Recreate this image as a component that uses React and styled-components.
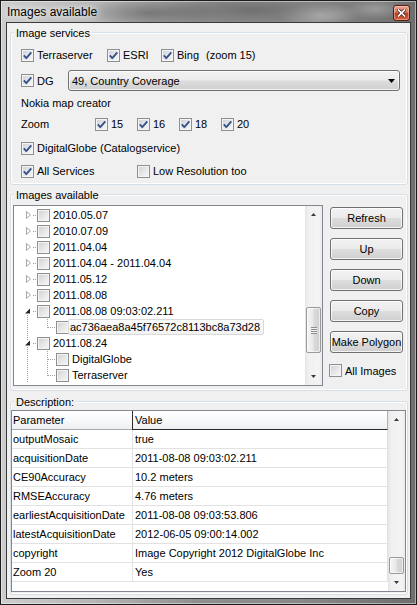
import React from 'react';
import styled, { createGlobalStyle } from 'styled-components';

const Global = createGlobalStyle`
  html, body { margin: 0; padding: 0; background: #ffffff; }
  body {
    font-family: "Liberation Sans", Arial, sans-serif;
    font-size: 11px;
    color: #000;
  }
  * { box-sizing: border-box; }
`;

const Window = styled.div`
  width: 417px;
  height: 605px;
  display: flex;
  flex-direction: column;
  border: 1px solid #1c1c1c;
  padding: 0 6px 6px;
  box-shadow: inset 0 0 0 1px rgba(255, 255, 255, 0.45);
  background:
    radial-gradient(ellipse 70px 14px at 150px 12px, rgba(80, 80, 80, 0.5), rgba(80, 80, 80, 0)),
    radial-gradient(ellipse 90px 16px at 250px 9px, rgba(95, 95, 95, 0.6), rgba(95, 95, 95, 0)),
    radial-gradient(ellipse 40px 12px at 318px 14px, rgba(200, 200, 200, 0.6), rgba(200, 200, 200, 0)),
    radial-gradient(ellipse 30px 10px at 375px 8px, rgba(190, 190, 190, 0.5), rgba(190, 190, 190, 0)),
    linear-gradient(to right, #cdcdcd 0%, #b6b6b6 22%, #8e8e8e 48%, #8a8a8a 72%, #6e6e6e 100%);
`;

const TitleBar = styled.div`
  height: 22px;
  flex: none;
  display: flex;
  align-items: center;
  justify-content: space-between;
`;

const Title = styled.span`
  font-size: 12px;
  color: #000;
  text-shadow: 0 0 6px #fff, 0 0 10px rgba(255, 255, 255, 0.9);
`;

const CloseButton = styled.div`
  align-self: flex-start;
  margin-top: 4px;
  width: 17px;
  height: 16px;
  border: 1px solid #5a1a10;
  border-radius: 3px;
  display: flex;
  align-items: center;
  justify-content: center;
  background: linear-gradient(#eaa590 0%, #d9735a 45%, #c23c21 52%, #d35e3c 100%);
  box-shadow: inset 0 0 0 1px rgba(255, 255, 255, 0.35);
`;

const Client = styled.div`
  flex: 1;
  display: flex;
  flex-direction: column;
  background: #f0f0f0;
  box-shadow: 0 0 0 1px #3a3a3a;
  padding: 0 2px 3px 3px;
`;

const Group = styled.div`
  position: relative;
  flex: none;
  margin-top: ${(p) => p.$mt}px;
  border: 1px solid #d5dfe5;
  border-radius: 3px;
  box-shadow: inset 0 0 0 1px #ffffff;
  padding: ${(p) => p.$pad};
`;

const GroupLabel = styled.span`
  position: absolute;
  top: -7px;
  left: 3px;
  padding: 0 2px;
  line-height: 14px;
  background: #f0f0f0;
`;

const Line = styled.div`
  display: flex;
  align-items: center;
  height: ${(p) => p.$h}px;
  margin-top: ${(p) => p.$mt || 0}px;
`;

const Item = styled.label`
  display: flex;
  align-items: center;
  gap: 3px;
  flex: none;
  width: ${(p) => (p.$w ? `${p.$w}px` : 'auto')};
  white-space: nowrap;
  margin-left: ${(p) => p.$ml || 0}px;
  margin-top: ${(p) => p.$mt || 0}px;
`;

const Caption = styled.span`
  flex: none;
  width: ${(p) => (p.$w ? `${p.$w}px` : 'auto')};
  white-space: nowrap;
`;

const Box = styled.span`
  flex: none;
  width: 13px;
  height: 13px;
  border: 1px solid #8e8f8f;
  display: flex;
  align-items: center;
  justify-content: center;
  background: linear-gradient(135deg, #cbced3 0%, #e3e4e6 45%, #f8f8f8 100%);
  box-shadow: inset 0 0 0 1px #f4f4f4;
`;

const Select = styled.div`
  flex: none;
  width: 332px;
  height: 21px;
  display: flex;
  align-items: center;
  justify-content: space-between;
  padding: 0 4px 0 3px;
  border: 1px solid #707070;
  border-radius: 3px;
  background: linear-gradient(#f2f2f2 0%, #ebebeb 49%, #dddddd 51%, #cfcfcf 100%);
  box-shadow: inset 0 0 0 1px rgba(255, 255, 255, 0.7);
`;

const ImagesBody = styled.div`
  display: flex;
  gap: 7px;
`;

const Tree = styled.div`
  flex: none;
  width: 310px;
  height: 181px;
  display: flex;
  border: 1px solid #828790;
  background: #ffffff;
`;

const TreeBody = styled.div`
  flex: 1;
  min-width: 0;
  padding-top: 1px;
  overflow: hidden;
`;

const TreeRow = styled.div`
  display: flex;
  align-items: center;
  height: 16px;
  white-space: nowrap;
`;

const Gutter = styled.svg`
  flex: none;
  display: block;
`;

const NodeText = styled.span`
  height: 16px;
  line-height: 14px;
  border: 1px solid ${(p) => (p.$selected ? '#d9d9d9' : 'transparent')};
  border-radius: 2px;
  padding: 0 3px 0 1px;
  margin-left: ${(p) => (p.$selected ? -1 : 1)}px;
  background: ${(p) => (p.$selected ? 'linear-gradient(#fbfbfb, #f1f1f1)' : 'transparent')};
`;

const Scroll = styled.div`
  flex: none;
  width: 17px;
  display: flex;
  flex-direction: column;
  background: linear-gradient(to right, #e4e4e4 0%, #f0f0f0 18%, #f4f4f4 82%, #e9e9e9 100%);
`;

const ScrollBtn = styled.div`
  flex: none;
  height: 17px;
  display: flex;
  align-items: center;
  justify-content: center;
`;

const Track = styled.div`
  flex: 1;
  display: flex;
  flex-direction: column;
  align-items: center;
`;

const Thumb = styled.div`
  width: 15px;
  height: ${(p) => p.$h}px;
  margin-top: ${(p) => p.$top}px;
  border: 1px solid #9a9a9a;
  border-radius: 2px;
  display: flex;
  align-items: center;
  justify-content: center;
  background: linear-gradient(to right, #f5f5f5 0%, #e9e9e9 45%, #dadada 55%, #d0d0d0 100%);
  box-shadow: inset 0 0 0 1px rgba(255, 255, 255, 0.6);
`;

const Grip = styled.span`
  width: 6px;
  height: 7px;
  background: repeating-linear-gradient(to bottom, #8c8c8c 0 1px, #f4f4f4 1px 2px);
`;

const Side = styled.div`
  flex: none;
  width: 73px;
  display: flex;
  flex-direction: column;
  gap: 9px;
  padding-top: 2px;
`;

const PushButton = styled.button`
  width: 73px;
  height: 22px;
  padding: 0;
  font-family: "Liberation Sans", Arial, sans-serif;
  font-size: 11px;
  color: #000;
  white-space: nowrap;
  border: 1px solid #707070;
  border-radius: 3px;
  background: linear-gradient(#f2f2f2 0%, #ebebeb 49%, #dddddd 51%, #cfcfcf 100%);
  box-shadow: inset 0 0 0 1px rgba(255, 255, 255, 0.75);
`;

const ListView = styled.div`
  width: 395px;
  height: 182px;
  display: flex;
  border: 1px solid #828790;
  background: #ffffff;
`;

const ListGrid = styled.div`
  flex: 1;
  min-width: 0;
  display: flex;
  flex-direction: column;
`;

const HeaderRow = styled.div`
  display: flex;
  height: 19px;
  flex: none;
`;

const HeadCell = styled.div`
  height: 19px;
  line-height: 18px;
  white-space: nowrap;
  background: linear-gradient(#ffffff 0%, #f6f7f8 60%, #eeeff1 100%);
  ${(p) =>
    p.$first
      ? `width: 120px; flex: none; padding-left: 1px; border-bottom: 1px solid #a9a9a9;`
      : `flex: 1; padding-left: 2px; border-left: 1px solid #2a2a2a; border-bottom: 1px solid #2a2a2a; border-right: 1px solid #b0b0b0;`}
`;

const ListRow = styled.div`
  display: flex;
  height: 19px;
  flex: none;
  border-bottom: 1px solid #e2e2e2;
  border-right: 1px solid #e2e2e2;
`;

const Cell = styled.div`
  line-height: 18px;
  white-space: nowrap;
  ${(p) =>
    p.$first
      ? `width: 121px; flex: none; padding-left: 1px; border-right: 1px solid #e2e2e2;`
      : `flex: 1; padding-left: 2px;`}
`;

const Check = ({ checked }) => (
  <Box>
    {checked && (
      <svg width="11" height="11" viewBox="0 0 11 11">
        <path d="M1.8 5.4 L4.3 8.2 L9.3 2.3" fill="none" stroke="#34508a" strokeWidth="1.8" strokeLinejoin="round" />
      </svg>
    )}
  </Box>
);

const Arrow = ({ down, w = 5, h = 3, color = '#3a3a3a' }) => (
  <svg width={w} height={h} viewBox={`0 0 ${w} ${h}`}>
    <path d={down ? `M0 0 L${w / 2} ${h} L${w} 0 Z` : `M0 ${h} L${w / 2} 0 L${w} ${h} Z`} fill={color} />
  </svg>
);

const ScrollBar = ({ top, height, grip }) => (
  <Scroll>
    <ScrollBtn><Arrow /></ScrollBtn>
    <Track>
      <Thumb $top={top} $h={height}>{grip && <Grip />}</Thumb>
    </Track>
    <ScrollBtn><Arrow down /></ScrollBtn>
  </Scroll>
);

const DOT = { stroke: '#a0a0a0', strokeDasharray: '1 1', strokeWidth: 1, shapeRendering: 'crispEdges' };

const RootGutter = ({ open, above, below }) => (
  <Gutter width="23" height="16" viewBox="0 0 23 16">
    {above && <line x1="13.5" y1="0" x2="13.5" y2="5" {...DOT} />}
    {below && <line x1="13.5" y1="12" x2="13.5" y2="16" {...DOT} />}
    {open ? (
      <path d="M16 5.5 L16 10.5 L11 10.5 Z" fill="#262626" />
    ) : (
      <path d="M12.5 4.5 L16.5 8 L12.5 11.5 Z" fill="#ffffff" stroke="#a6a6a6" strokeWidth="1" />
    )}
    <line x1="19" y1="8.5" x2="23" y2="8.5" {...DOT} />
  </Gutter>
);

const ChildGutter = ({ last }) => (
  <Gutter width="42" height="16" viewBox="0 0 42 16">
    <line x1="13.5" y1="0" x2="13.5" y2="16" {...DOT} />
    <line x1="33.5" y1="0" x2="33.5" y2={last ? 9 : 16} {...DOT} />
    <line x1="34" y1="8.5" x2="42" y2="8.5" {...DOT} />
  </Gutter>
);

const treeRows = [
  { text: '2010.05.07' },
  { text: '2010.07.09' },
  { text: '2011.04.04' },
  { text: '2011.04.04 - 2011.04.04' },
  { text: '2011.05.12' },
  { text: '2011.08.08' },
  { text: '2011.08.08 09:03:02.211', open: true, below: true },
  { text: 'ac736aea8a45f76572c8113bc8a73d28', child: true, last: true, selected: true },
  { text: '2011.08.24', open: true, above: true, below: true },
  { text: 'DigitalGlobe', child: true },
  { text: 'Terraserver', child: true, last: true },
];

const params = [
  ['outputMosaic', 'true'],
  ['acquisitionDate', '2011-08-08 09:03:02.211'],
  ['CE90Accuracy', '10.2 meters'],
  ['RMSEAccuracy', '4.76 meters'],
  ['earliestAcquisitionDate', '2011-08-08 09:03:53.806'],
  ['latestAcquisitionDate', '2012-06-05 09:00:14.002'],
  ['copyright', 'Image Copyright 2012 DigitalGlobe Inc'],
  ['Zoom 20', 'Yes'],
];

export default function App() {
  return (
    <>
      <Global />
      <Window>
        <TitleBar>
          <Title>Images available</Title>
          <CloseButton>
            <svg width="9" height="8" viewBox="0 0 9 8">
              <path d="M1.5 1 L7.5 7 M7.5 1 L1.5 7" stroke="#4a2a24" strokeWidth="3.2" strokeLinecap="square" />
              <path d="M1.5 1 L7.5 7 M7.5 1 L1.5 7" stroke="#ffffff" strokeWidth="1.7" strokeLinecap="square" />
            </svg>
          </CloseButton>
        </TitleBar>
        <Client>
          <Group $mt={9} $pad="14px 6px 5px 10px">
            <GroupLabel>Image services</GroupLabel>
            <Line $h={16}>
              <Item $w={86}><Check checked />Terraserver</Item>
              <Item $w={54}><Check checked />ESRI</Item>
              <Item $w={45}><Check checked />Bing</Item>
              <Caption>(zoom 15)</Caption>
            </Line>
            <Line $h={21} $mt={7}>
              <Item $w={47}><Check checked />DG</Item>
              <Select>
                <span>49, Country Coverage</span>
                <Arrow down w={7} h={4} color="#000" />
              </Select>
            </Line>
            <Line $h={14} $mt={5}>
              <Caption>Nokia map creator</Caption>
            </Line>
            <Line $h={16} $mt={6}>
              <Caption $w={74}>Zoom</Caption>
              <Item $w={42}><Check checked />15</Item>
              <Item $w={42}><Check checked />16</Item>
              <Item $w={42}><Check checked />18</Item>
              <Item $w={42}><Check checked />20</Item>
            </Line>
            <Line $h={16} $mt={8}>
              <Item><Check checked />DigitalGlobe (Catalogservice)</Item>
            </Line>
            <Line $h={16} $mt={7}>
              <Item $w={116}><Check checked />All Services</Item>
              <Item><Check />Low Resolution too</Item>
            </Line>
          </Group>

          <Group $mt={9} $pad="10px 4px 4px 2px">
            <GroupLabel>Images available</GroupLabel>
            <ImagesBody>
              <Tree>
                <TreeBody>
                  {treeRows.map((r) => (
                    <TreeRow key={r.text}>
                      {r.child ? (
                        <ChildGutter last={r.last} />
                      ) : (
                        <RootGutter open={r.open} above={r.above} below={r.below} />
                      )}
                      <Check />
                      <NodeText $selected={r.selected}>{r.text}</NodeText>
                    </TreeRow>
                  ))}
                </TreeBody>
                <ScrollBar top={84} height={46} grip />
              </Tree>
              <Side>
                <PushButton>Refresh</PushButton>
                <PushButton>Up</PushButton>
                <PushButton>Down</PushButton>
                <PushButton>Copy</PushButton>
                <PushButton>Make Polygon</PushButton>
                <Item $mt={2} $ml={-1}><Check />All Images</Item>
              </Side>
            </ImagesBody>
          </Group>

          <Group $mt={10} $pad="8px 1px 2px 0">
            <GroupLabel>Description:</GroupLabel>
            <ListView>
              <ListGrid>
                <HeaderRow>
                  <HeadCell $first>Parameter</HeadCell>
                  <HeadCell>Value</HeadCell>
                </HeaderRow>
                {params.map(([k, v]) => (
                  <ListRow key={k}>
                    <Cell $first>{k}</Cell>
                    <Cell>{v}</Cell>
                  </ListRow>
                ))}
              </ListGrid>
              <ScrollBar top={129} height={17} />
            </ListView>
          </Group>
        </Client>
      </Window>
    </>
  );
}
